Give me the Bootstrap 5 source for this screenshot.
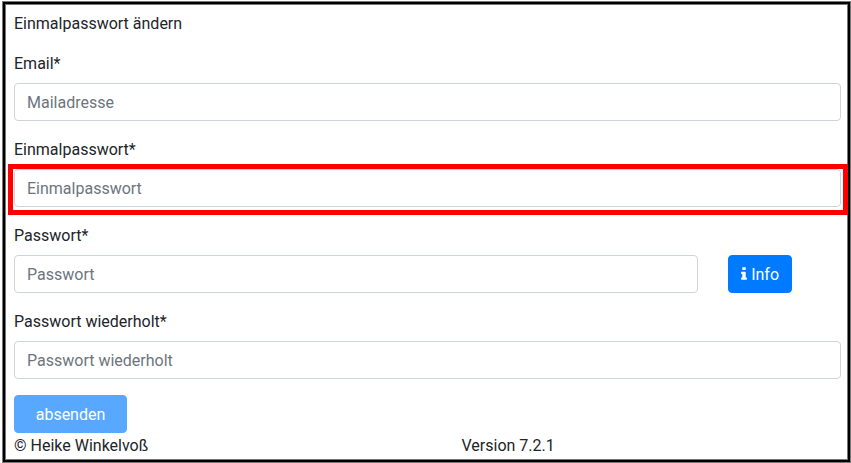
<!DOCTYPE html>
<html lang="de">
<head>
<meta charset="utf-8">
<meta name="viewport" content="width=device-width, initial-scale=1">
<title>Einmalpasswort ändern</title>
<link href="https://cdn.jsdelivr.net/npm/bootstrap@5.3.0/dist/css/bootstrap.min.css" rel="stylesheet">
<style>
body { font-family: Roboto, "Liberation Sans", sans-serif; color: #212529; background: #fff; }
.page-frame {
  margin: 1px 0 1px 2px;
  padding: 10px 9px 4px 11px;
  border: 1px solid #777;
  box-shadow: inset 0 0 0 2px #000, inset 0 0 0 3px #777;
}
.page-title { margin-bottom: 15px; }
.form-label { padding-top: 1px; margin-bottom: 7px; }
.wide-gutter { --bs-gutter-x: 30px; }
.form-control { padding-top: 7px; padding-bottom: 5px; border-color: #ced4da; border-radius: 4px; }
.form-control::placeholder { color: #6c757d; opacity: 1; }
.btn { --bs-btn-border-radius: 4px; padding-top: 7px; padding-bottom: 5px; }
.btn-primary {
  --bs-btn-bg: #007bff; --bs-btn-border-color: #007bff;
  --bs-btn-hover-bg: #0069d9; --bs-btn-hover-border-color: #0062cc;
  --bs-btn-disabled-bg: #007bff; --bs-btn-disabled-border-color: #007bff;
}
.btn-send { --bs-btn-padding-x: 20px; min-width: 113px; }
.info-icon { width: 6px; height: 16px; vertical-align: -2px; }
.highlight { position: absolute; inset: -5px -7px -8px -6px; border: 5px solid #f00; pointer-events: none; }
.page-footer { padding-top: 1px; }
.version { padding-left: 34px; }
</style>
</head>
<body>
<main class="page-frame">
  <p class="page-title">Einmalpasswort ändern</p>
  <form>
    <div class="mb-3">
      <label class="form-label" for="email">Email*</label>
      <input type="email" class="form-control" id="email" placeholder="Mailadresse">
    </div>
    <div class="mb-3">
      <label class="form-label" for="otp">Einmalpasswort*</label>
      <div class="position-relative">
        <input type="text" class="form-control" id="otp" placeholder="Einmalpasswort">
        <div class="highlight"></div>
      </div>
    </div>
    <div class="mb-3">
      <label class="form-label" for="password">Passwort*</label>
      <div class="row wide-gutter">
        <div class="col-10">
          <input type="password" class="form-control" id="password" placeholder="Passwort">
        </div>
        <div class="col-2">
          <button type="button" class="btn btn-primary text-nowrap"><svg class="info-icon" viewBox="0 0 640 1792" fill="currentColor" aria-hidden="true"><path d="M640 1344v128q0 26-19 45t-45 19H64q-26 0-45-19t-19-45v-128q0-26 19-45t45-19h64V896H64q-26 0-45-19T0 832V704q0-26 19-45t45-19h384q26 0 45 19t19 45v576h64q26 0 45 19t19 45zM512 192v192q0 26-19 45t-45 19H192q-26 0-45-19t-19-45V192q0-26 19-45t45-19h256q26 0 45 19t19 45z"/></svg> Info</button>
        </div>
      </div>
    </div>
    <div class="mb-3">
      <label class="form-label" for="repeat">Passwort wiederholt*</label>
      <input type="password" class="form-control" id="repeat" placeholder="Passwort wiederholt">
    </div>
    <button type="submit" class="btn btn-primary btn-send" disabled>absenden</button>
  </form>
  <footer class="row g-0 page-footer">
    <div class="col-6">© Heike Winkelvoß</div>
    <div class="col-6 version">Version 7.2.1</div>
  </footer>
</main>
<script src="https://cdn.jsdelivr.net/npm/bootstrap@5.3.0/dist/js/bootstrap.bundle.min.js"></script>
</body>
</html>
